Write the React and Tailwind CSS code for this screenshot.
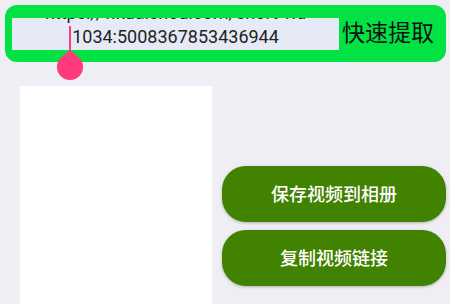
import React from 'react';

function SelectHandle() {
  return (
    <div className="absolute left-[57px] top-[26px] flex w-[26px] flex-col items-center">
      <div className="h-[25px] w-[2px] bg-[#ff3b7c]" />
      <svg width="26" height="30" viewBox="0 0 26 30" className="-mt-[1px]">
        <path d="M13 0 L4.64 7.04 A13 13 0 1 0 21.36 7.04 Z" fill="#ff3b7c" />
      </svg>
    </div>
  );
}

export default function App() {
  return (
    <div
      className="relative h-[304px] w-[450px] overflow-hidden bg-[#eeeef4]"
      style={{ fontFamily: 'Roboto, "Noto Sans CJK SC", sans-serif' }}
    >
      {/* search bar */}
      <div className="mx-[5px] mt-[5px] flex h-[57px] w-[441px] items-center rounded-[12px] bg-[#03e244] pl-[7px]">
        {/* scrolled multi-line input, first line mostly hidden */}
        <div className="relative h-[32px] w-[327px] shrink-0 overflow-hidden bg-[#e6eaf6]">
          <div className="absolute left-0 right-0 top-[-18px] text-center text-[18px] text-[#222]">
            <div className="whitespace-nowrap leading-[26px]">https://v.kuaishou.com/short-vid</div>
            <div className="whitespace-nowrap leading-[22px]">1034:5008367853436944</div>
          </div>
        </div>
        <span className="ml-[3px] text-[23px] leading-none text-[#111]">快速提取</span>
      </div>

      <SelectHandle />

      <div className="mt-[24px] flex">
        <div className="ml-[20px] h-[230px] w-[192px] bg-white" />
        <div className="ml-[10px] flex w-[224px] flex-col gap-[8px] pt-[80px]">
          <button className="h-[56px] rounded-[24px] bg-[#418200] text-[18px] font-medium text-white shadow-[0_1px_3px_rgba(0,0,0,0.25)]">
            保存视频到相册
          </button>
          <button className="h-[56px] rounded-[24px] bg-[#418200] text-[18px] font-medium text-white shadow-[0_1px_3px_rgba(0,0,0,0.25)]">
            复制视频链接
          </button>
        </div>
      </div>
    </div>
  );
}
